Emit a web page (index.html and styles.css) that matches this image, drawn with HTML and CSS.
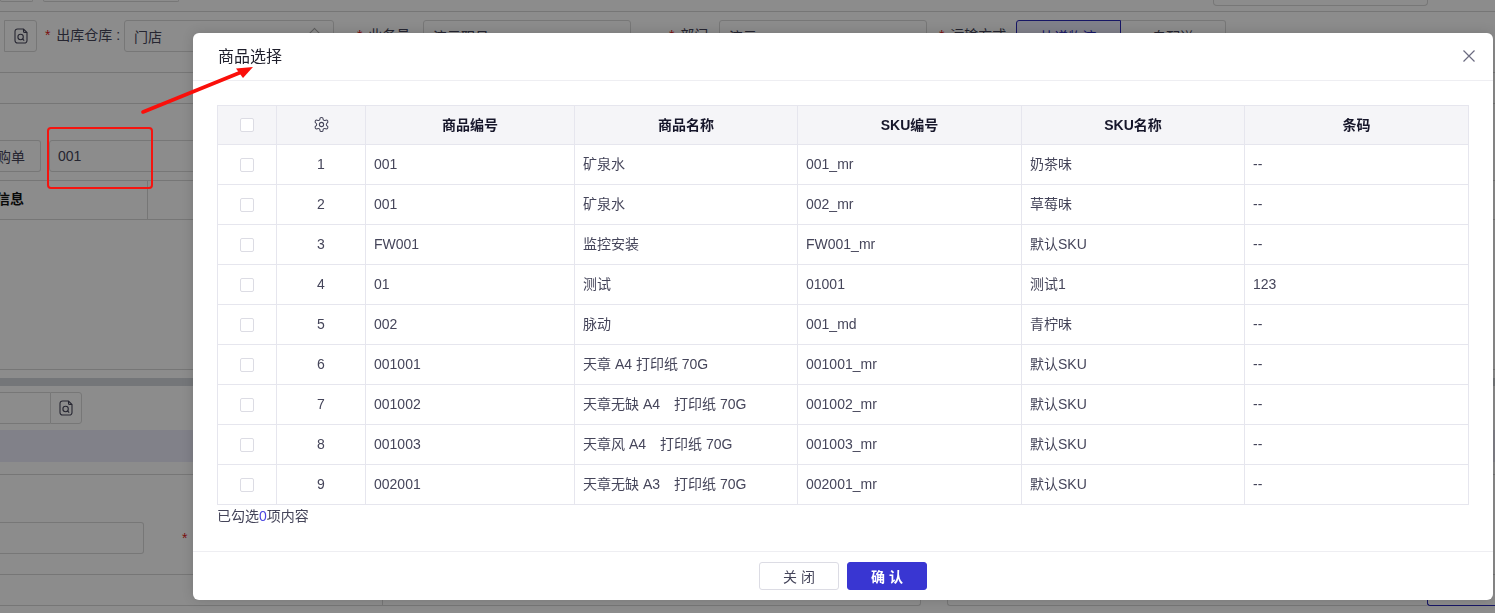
FILE: index.html
```html
<!DOCTYPE html>
<html lang="en">
<head>
    <meta charset="UTF-8">
    <meta name="viewport" content="width=device-width, initial-scale=1.0">
    <title>商品选择</title>
    <link rel="stylesheet" href="styles.css">
</head>
<body>
    <svg class="icon-defs" width="0" height="0">
        <symbol id="file-search" viewBox="0 0 14 16">
            <path d="M9.5 1H3.5A2.5 2.5 0 0 0 1 3.5v9A2.5 2.5 0 0 0 3.5 15h7a2.5 2.5 0 0 0 2.5-2.5V4.5z" fill="none" stroke="currentColor" stroke-width="1.1"/>
            <path d="M9.5 1v2.2a1.3 1.3 0 0 0 1.3 1.3H13" fill="none" stroke="currentColor" stroke-width="1.1"/>
            <circle cx="6.6" cy="9" r="2.7" fill="none" stroke="currentColor" stroke-width="1.1"/>
            <path d="M8.6 11l1.6 1.6" stroke="currentColor" stroke-width="1.1"/>
        </symbol>
    </svg>

    <div class="page">
        <div class="row row-top">
            <div class="stub stub-a"></div>
            <div class="stub stub-b"></div>
            <div class="stub stub-c"></div>
        </div>

        <div class="row row-form">
            <div class="box addon"><svg class="addon-icon"><use href="#file-search"/></svg></div>
            <label class="field-label label-store"><span class="req">*</span> 出库仓库 :</label>
            <div class="box select-store">门店<span class="chevron"></span></div>
            <label class="field-label label-staff"><span class="req">*</span> 业务员</label>
            <div class="box input-staff">演示职员</div>
            <label class="field-label label-dept"><span class="req">*</span> 部门</label>
            <div class="box input-dept">演示</div>
            <label class="field-label label-ship"><span class="req">*</span> 运输方式</label>
            <div class="box ship-on">快递物流</div>
            <div class="box ship-off">自配送</div>
        </div>

        <div class="row row-blank"></div>

        <div class="row-search">
            <div class="box btn-order">采购单</div>
            <div class="box input-code">001</div>
        </div>

        <div class="row row-head">
            <div class="head-title">商品信息</div>
        </div>
        <div class="row row-list"></div>
        <div class="dark-bar"></div>

        <div class="row-sub">
            <div class="box input-sub"></div>
            <div class="box addon addon-sub"><svg class="addon-icon"><use href="#file-search"/></svg></div>
        </div>

        <div class="band"></div>
        <div class="row row-gap"></div>
        <div class="row row-note">
            <div class="box input-note"></div>
            <span class="req req-note">*</span>
        </div>
        <div class="row row-last">
            <div class="last-a"></div>
            <div class="last-b"></div>
            <div class="last-c"></div>
            <div class="last-d"></div>
        </div>
    </div>

    <div class="overlay"></div>

    <div class="modal">
        <div class="modal-header">
            <span class="modal-title">商品选择</span>
            <svg class="modal-close" width="12" height="12" viewBox="0 0 12 12">
                <path d="M0.5 0.5L11.5 11.5M11.5 0.5L0.5 11.5" stroke="currentColor" stroke-width="1.2" fill="none"/>
            </svg>
        </div>
        <div class="modal-body">
            <table class="goods">
                <colgroup>
                    <col class="col-check">
                    <col class="col-index">
                    <col class="col-code">
                    <col class="col-name">
                    <col class="col-sku">
                    <col class="col-skuname">
                    <col class="col-bar">
                </colgroup>
                <thead>
                    <tr>
                        <th><span class="check"></span></th>
                        <th>
                            <svg class="gear" width="17" height="17" viewBox="0 0 24 24" fill="none" stroke="currentColor" stroke-width="1.5">
                                <path d="M12.22 2h-.44a2 2 0 0 0-2 2v.18a2 2 0 0 1-1 1.73l-.43.25a2 2 0 0 1-2 0l-.15-.08a2 2 0 0 0-2.73.73l-.22.38a2 2 0 0 0 .73 2.73l.15.1a2 2 0 0 1 1 1.72v.51a2 2 0 0 1-1 1.74l-.15.09a2 2 0 0 0-.73 2.73l.22.38a2 2 0 0 0 2.73.73l.15-.08a2 2 0 0 1 2 0l.43.25a2 2 0 0 1 1 1.73V20a2 2 0 0 0 2 2h.44a2 2 0 0 0 2-2v-.18a2 2 0 0 1 1-1.73l.43-.25a2 2 0 0 1 2 0l.15.08a2 2 0 0 0 2.73-.73l.22-.39a2 2 0 0 0-.73-2.73l-.15-.08a2 2 0 0 1-1-1.74v-.5a2 2 0 0 1 1-1.74l.15-.09a2 2 0 0 0 .73-2.73l-.22-.38a2 2 0 0 0-2.73-.73l-.15.08a2 2 0 0 1-2 0l-.43-.25a2 2 0 0 1-1-1.73V4a2 2 0 0 0-2-2z"/>
                                <circle cx="12" cy="12" r="3"/>
                            </svg>
                        </th>
                        <th>商品编号</th>
                        <th>商品名称</th>
                        <th>SKU编号</th>
                        <th>SKU名称</th>
                        <th>条码</th>
                    </tr>
                </thead>
                <tbody>
                    <tr><td class="center"><span class="check"></span></td><td class="center">1</td><td>001</td><td>矿泉水</td><td>001_mr</td><td>奶茶味</td><td>--</td></tr>
                    <tr><td class="center"><span class="check"></span></td><td class="center">2</td><td>001</td><td>矿泉水</td><td>002_mr</td><td>草莓味</td><td>--</td></tr>
                    <tr><td class="center"><span class="check"></span></td><td class="center">3</td><td>FW001</td><td>监控安装</td><td>FW001_mr</td><td>默认SKU</td><td>--</td></tr>
                    <tr><td class="center"><span class="check"></span></td><td class="center">4</td><td>01</td><td>测试</td><td>01001</td><td>测试1</td><td>123</td></tr>
                    <tr><td class="center"><span class="check"></span></td><td class="center">5</td><td>002</td><td>脉动</td><td>001_md</td><td>青柠味</td><td>--</td></tr>
                    <tr><td class="center"><span class="check"></span></td><td class="center">6</td><td>001001</td><td>天章 A4 打印纸 70G</td><td>001001_mr</td><td>默认SKU</td><td>--</td></tr>
                    <tr><td class="center"><span class="check"></span></td><td class="center">7</td><td>001002</td><td>天章无缺 A4　打印纸 70G</td><td>001002_mr</td><td>默认SKU</td><td>--</td></tr>
                    <tr><td class="center"><span class="check"></span></td><td class="center">8</td><td>001003</td><td>天章风 A4　打印纸 70G</td><td>001003_mr</td><td>默认SKU</td><td>--</td></tr>
                    <tr><td class="center"><span class="check"></span></td><td class="center">9</td><td>002001</td><td>天章无缺 A3　打印纸 70G</td><td>002001_mr</td><td>默认SKU</td><td>--</td></tr>
                </tbody>
            </table>
            <div class="summary">已勾选<span class="summary-num">0</span>项内容</div>
        </div>
        <div class="modal-footer">
            <button class="btn btn-close" type="button">关 闭</button>
            <button class="btn btn-ok" type="button">确 认</button>
        </div>
    </div>

    <!-- annotation drawn on top of the screenshot -->
    <div class="mark-box"></div>
    <svg class="mark-arrow" width="140" height="60" viewBox="0 0 140 60">
        <path d="M3 52L104 11" stroke="#fa0f0a" stroke-width="3.6" stroke-linecap="round" fill="none"/>
        <path d="M113 7L96 8.5L103 18z" fill="#fa0f0a"/>
    </svg>
</body>
</html>
```

FILE: styles.css
```css
html, body {
    height: 100%;
}
body {
    font-family: "Liberation Sans", "Noto Sans CJK SC", sans-serif;
    font-size: 14px;
    margin: 0;
    height: 613px;
    overflow: hidden;
    background-color: #fff;
    color: #45455a;
}
.icon-defs {
    position: absolute;
}

/* page behind the dialog */
.page {
    height: 613px;
    overflow: hidden;
}
.row {
    display: flex;
    box-sizing: border-box;
    border-bottom: 1px solid #d8d8d8;
}
.box {
    box-sizing: border-box;
    height: 32px;
    border: 1px solid #d9d9d9;
    border-radius: 3px;
    display: flex;
    align-items: center;
    flex-shrink: 0;
    white-space: nowrap;
}
.row-top {
    height: 12px;
    align-items: flex-start;
}
.stub {
    box-sizing: border-box;
    border: 1px solid #d9d9d9;
    border-top: none;
    border-radius: 0 0 4px 4px;
}
.stub-a {
    width: 33px;
    height: 2px;
}
.stub-b {
    width: 136px;
    height: 2px;
    margin-left: 10px;
}
.stub-c {
    width: 215px;
    height: 6px;
    margin-left: 1034px;
}
.row-form {
    height: 61px;
    padding-top: 8px;
    align-items: flex-start;
}
.addon {
    width: 33px;
    margin-left: 4px;
    justify-content: center;
    border-radius: 0 3px 3px 0;
}
.addon-icon {
    width: 14px;
    height: 16px;
    color: #45455a;
}
.field-label {
    line-height: 30px;
    white-space: nowrap;
    flex-shrink: 0;
}
.req {
    color: #e02020;
    margin-right: 2px;
}
.label-store {
    width: 79px;
    margin-left: 8px;
}
.select-store {
    width: 210px;
    margin-left: 0;
    padding-left: 9px;
}
.chevron {
    width: 10px;
    height: 10px;
    margin-left: auto;
    margin-right: 13px;
    margin-top: -1px;
    border-left: 1px solid #aaa;
    border-top: 1px solid #aaa;
    transform: rotate(45deg);
}
.label-staff {
    width: 66px;
    margin-left: 23px;
}
.input-staff {
    width: 208px;
    padding-left: 9px;
}
.label-dept {
    width: 50px;
    margin-left: 38px;
}
.input-dept {
    width: 208px;
    padding-left: 9px;
}
.label-ship {
    width: 77px;
    margin-left: 12px;
}
.ship-on {
    width: 105px;
    justify-content: center;
    border-color: #2b28b8;
    background-color: #e9e9fb;
    color: #2b28b8;
    border-radius: 3px 0 0 3px;
}
.ship-off {
    width: 105px;
    justify-content: center;
    border-left: none;
    border-radius: 0 3px 3px 0;
}
.row-blank {
    height: 31px;
}
.row-search {
    height: 76px;
    padding-top: 36px;
    box-sizing: border-box;
    display: flex;
}
.btn-order {
    width: 41px;
    justify-content: flex-end;
    padding-right: 15px;
    border-left: none;
    border-radius: 0 3px 3px 0;
}
.input-code {
    width: 400px;
    margin-left: 8px;
    padding-left: 8px;
}
.row-head {
    height: 40px;
    border-top: 1px solid #d8d8d8;
}
.head-title {
    box-sizing: border-box;
    width: 180px;
    margin-left: -32px;
    line-height: 36px;
    font-weight: 700;
    color: #111;
    white-space: nowrap;
    border-right: 1px solid #d8d8d8;
    flex-shrink: 0;
}
.row-list {
    height: 150px;
}
.dark-bar {
    height: 8px;
    margin-top: 8px;
    background-color: #d4d8dc;
}
.row-sub {
    display: flex;
    height: 44px;
    padding-top: 6px;
    box-sizing: border-box;
}
.input-sub {
    width: 50px;
    border-left: none;
    border-right: none;
    border-radius: 0;
}
.addon-sub {
    width: 32px;
    margin-left: 0;
}
.band {
    height: 32px;
    background-color: #ebebfa;
}
.row-gap {
    height: 13px;
}
.row-note {
    height: 100px;
    padding-top: 47px;
    align-items: flex-start;
}
.input-note {
    width: 144px;
    border-left: none;
    border-radius: 0 3px 3px 0;
}
.req-note {
    margin-left: 38px;
    line-height: 32px;
}
.row-last {
    height: 32px;
    border-bottom: none;
}
.last-a {
    width: 383px;
    height: 31px;
    border-bottom: 1px solid #d8d8d8;
    border-right: 1px solid #d8d8d8;
    box-sizing: border-box;
}
.last-b {
    width: 538px;
    height: 31px;
    border-bottom: 1px solid #d8d8d8;
    border-right: 1px solid #d8d8d8;
    border-radius: 0 0 3px 0;
    box-sizing: border-box;
}
.last-c {
    width: 480px;
    height: 31px;
    margin-left: 26px;
    border-bottom: 1px solid #d8d8d8;
    border-left: 1px solid #d8d8d8;
    border-radius: 0 0 0 3px;
    box-sizing: border-box;
}
.last-d {
    width: 68px;
    height: 31px;
    border-bottom: 1px solid #2b28b8;
    border-left: 1px solid #2b28b8;
    border-radius: 0 0 0 3px;
    box-sizing: border-box;
}
.overlay {
    position: fixed;
    top: 0;
    left: 0;
    right: 0;
    bottom: 0;
    background: rgba(0, 0, 0, 0.45);
}

/* dialog */
.modal {
    position: absolute;
    left: 193px;
    top: 33px;
    width: 1300px;
    height: 567px;
    display: flex;
    flex-direction: column;
    background: white;
    border-radius: 6px;
    box-shadow: 0 0 12px rgba(0, 0, 0, 0.15);
}
.modal-header {
    height: 48px;
    box-sizing: border-box;
    border-bottom: 1px solid #eeeef2;
    padding: 0 18px 2px 25px;
    display: flex;
    align-items: center;
    justify-content: space-between;
}
.modal-title {
    font-size: 16px;
    color: #1f1f2c;
    margin-bottom: 2px;
}
.modal-close {
    color: #6b6b80;
}
.modal-body {
    flex: 1;
    padding: 24px 24px 0;
}
.goods {
    table-layout: fixed;
    border-collapse: collapse;
    width: 1251px;
}
.col-check {
    width: 59px;
}
.col-index {
    width: 89px;
}
.col-code {
    width: 209px;
}
.col-name {
    width: 223px;
}
.col-sku {
    width: 224px;
}
.col-skuname {
    width: 223px;
}
.col-bar {
    width: 224px;
}
.goods th, .goods td {
    height: 40px;
    box-sizing: border-box;
    border: 1px solid #e6e6ee;
    padding: 0 8px 2px;
    white-space: nowrap;
}
.goods th {
    height: 39px;
    background-color: #f5f5f8;
    color: #16162a;
    font-weight: 700;
}
/* the CJK columns sit a pixel low otherwise */
.goods td:nth-child(4), .goods td:nth-child(6) {
    padding-bottom: 4px;
}
.goods td.center {
    text-align: center;
}
.check {
    display: inline-block;
    vertical-align: middle;
    box-sizing: border-box;
    width: 14px;
    height: 14px;
    border: 1px solid #dcdce4;
    border-radius: 2px;
    background: white;
}
.gear {
    display: block;
    margin: 0 auto;
    color: #45455a;
}
.summary {
    line-height: 22px;
}
.summary-num {
    color: #4a46e0;
}
.modal-footer {
    height: 49px;
    box-sizing: border-box;
    border-top: 1px solid #eeeef2;
    display: flex;
    align-items: center;
    justify-content: center;
    gap: 8px;
}
.btn {
    width: 80px;
    height: 28px;
    box-sizing: border-box;
    border-radius: 3px;
    font-family: inherit;
    font-size: 14px;
    cursor: pointer;
}
.btn-close {
    background: white;
    border: 1px solid #dcdce4;
    color: #45455a;
}
.btn-ok {
    background-color: #3936d2;
    border: 1px solid #3936d2;
    color: white;
    font-weight: 700;
}
.mark-box {
    position: absolute;
    left: 47px;
    top: 127px;
    width: 106px;
    height: 62px;
    box-sizing: border-box;
    border: 2px solid #f5140f;
    border-radius: 4px;
}
.mark-arrow {
    position: absolute;
    left: 140px;
    top: 60px;
}
```
